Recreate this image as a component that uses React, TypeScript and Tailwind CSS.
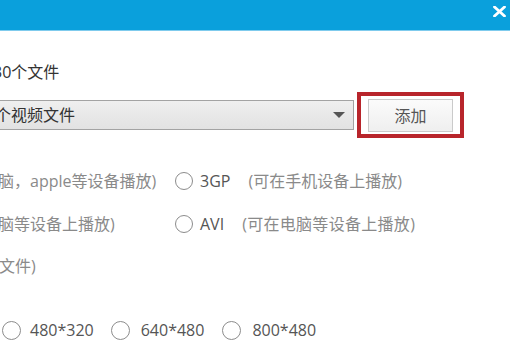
import React from "react";

function Radio({ className = "" }: { className?: string }) {
  return <span className={`inline-block shrink-0 rounded-full border border-[#8c8c8c] bg-white ${className}`} />;
}

export default function App() {
  return (
    <div className="w-[510px] h-[340px] overflow-hidden bg-white font-['Open_Sans','Noto_Sans_CJK_SC',sans-serif] text-[16px]">
      {/* title bar */}
      <div className="relative h-[31px] bg-[#0aa0dc] border-b border-[#7fcbed]">
        <svg className="absolute left-[493px] top-[6px]" width="13" height="11" viewBox="0 0 13 11">
          <path d="M1.5 1 L11.5 10 M11.5 1 L1.5 10" stroke="#fff" strokeWidth="2.8" strokeLinecap="round" />
        </svg>
      </div>

      <div className="flex flex-col">
        <div className="mt-[31px] h-[20px] leading-[20px] -ml-[7px] text-[#333]">30个文件</div>

        <div className="mt-[10px] flex items-center">
          <div className="-ml-[20px] w-[374px] h-[30px] flex items-center justify-between border border-[#a3a3a3] bg-gradient-to-b from-[#efefef] to-[#e2e2e2]">
            <span className="ml-[14px] text-[#333] leading-[20px]">个视频文件</span>
            <svg className="mr-[8px]" width="12" height="6" viewBox="0 0 12 6">
              <path d="M0 0 H12 L6 6 Z" fill="#555" />
            </svg>
          </div>
          <div className="ml-[3px] w-[107px] h-[46px] border-[4px] border-[#b8252b] flex items-center justify-center">
            <button className="w-[85px] h-[33px] mt-[1px] border border-[#cacaca] bg-gradient-to-b from-[#fbfbfb] to-[#efefef] text-[#555] text-[16px] leading-none">
              添加
            </button>
          </div>
        </div>

        <div className="mt-[31px] h-[24px] flex items-center">
          <span className="w-[175px] -ml-[2px] text-[#8a8a8a] whitespace-nowrap">脑，apple等设备播放)</span>
          <Radio className="w-[18px] h-[18px] ml-[2px]" />
          <span className="ml-[7px] text-[#555]">3GP</span>
          <span className="ml-[18px] text-[#8a8a8a] whitespace-nowrap">(可在手机设备上播放)</span>
        </div>

        <div className="mt-[19px] h-[24px] flex items-center">
          <span className="w-[175px] -ml-[2px] text-[#8a8a8a] whitespace-nowrap">脑等设备上播放)</span>
          <Radio className="w-[18px] h-[18px] ml-[2px]" />
          <span className="ml-[7px] text-[#555]">AVI</span>
          <span className="ml-[18px] text-[#8a8a8a] whitespace-nowrap tracking-[0.3px]">(可在电脑等设备上播放)</span>
        </div>

        <div className="mt-[18px] h-[24px] flex items-center -ml-[1px] text-[#8a8a8a]">文件)</div>

        <div className="mt-[40px] h-[24px] flex items-center text-[#555]">
          <Radio className="w-[19px] h-[19px] ml-[2px]" />
          <span className="ml-[9px]">480*320</span>
          <Radio className="w-[19px] h-[19px] ml-[17px]" />
          <span className="ml-[11px]">640*480</span>
          <Radio className="w-[19px] h-[19px] ml-[18px]" />
          <span className="ml-[11px]">800*480</span>
        </div>
      </div>
    </div>
  );
}
